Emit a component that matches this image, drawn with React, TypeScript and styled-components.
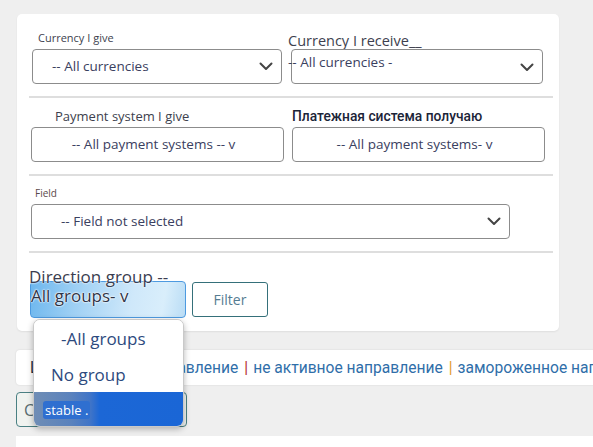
import React from "react";
import styled, { createGlobalStyle } from "styled-components";

const Global = createGlobalStyle`
  html, body { margin: 0; padding: 0; background: #efefef; overflow: hidden; }
  body { font-family: "Open Sans", "Noto Sans", sans-serif; }
  * { box-sizing: border-box; }
`;

const Page = styled.div`
  padding: 14px 0 0 16px;
  width: 593px;
  height: 447px;
  overflow: hidden;
`;

const Card = styled.div`
  margin-left: 1px;
  width: 542px;
  background: #fff;
  border-radius: 5px;
  box-shadow: 0 1px 2px rgba(0, 0, 0, 0.07);
  padding: 0 6px 0 12px;
`;

const Section = styled.div<{ $pt: number; $pb: number; $divider?: boolean }>`
  padding-top: ${(p) => p.$pt}px;
  padding-bottom: ${(p) => p.$pb}px;
  border-bottom: ${(p) => (p.$divider ? "2px solid #dedede" : "none")};
`;

const TwoCols = styled.div`
  display: grid;
  grid-template-columns: 256px 1fr;
  align-items: start;
`;

const Col = styled.div`
  display: flex;
  flex-direction: column;
`;

const Label = styled.div<{ $size: number; $lh: number; $indent: number; $mt?: number; $mb: number; $color?: string }>`
  font-size: ${(p) => p.$size}px;
  line-height: ${(p) => p.$lh}px;
  margin-left: ${(p) => p.$indent}px;
  margin-top: ${(p) => p.$mt ?? 0}px;
  margin-bottom: ${(p) => p.$mb}px;
  color: ${(p) => p.$color ?? "#3d3f4e"};
  white-space: nowrap;
`;

const RuLabel = styled(Label)`
  font-family: Roboto, "Liberation Sans", sans-serif;
  font-weight: 500;
`;

const SelectBox = styled.div<{ $indent: number; $width: number; $center?: boolean; $pl?: number; $top?: number }>`
  margin-left: ${(p) => p.$indent}px;
  width: ${(p) => p.$width}px;
  height: 35px;
  border: 1px solid #8c8c8c;
  border-radius: 4px;
  background: #fff;
  display: flex;
  align-items: ${(p) => (p.$top !== undefined ? "flex-start" : "center")};
  justify-content: ${(p) => (p.$center ? "center" : "space-between")};
  padding-top: ${(p) => p.$top ?? 0}px;
  padding-right: 8px;
  padding-left: ${(p) => p.$pl ?? 0}px;
  font-size: 13.5px;
  line-height: 19px;
  color: #3a4060;
  white-space: nowrap;
`;

const BoxText = styled.span<{ $shift?: number }>`
  margin-left: ${(p) => p.$shift ?? 0}px;
`;

const Chevron = styled.svg<{ $mt?: number }>`
  flex: none;
  margin-top: ${(p) => p.$mt ?? 0}px;
`;

const ChevronIcon = ({ mt }: { mt?: number }) => (
  <Chevron $mt={mt} width="14" height="9" viewBox="0 0 14 9">
    <polyline points="1.5,1.5 7,7 12.5,1.5" fill="none" stroke="#444" strokeWidth="2" strokeLinecap="round" strokeLinejoin="round" />
  </Chevron>
);

const GroupLabel = styled.div`
  font-size: 17px;
  line-height: 20px;
  color: #3a3d50;
  margin-bottom: -6px;
  position: relative;
  z-index: 2;
  text-shadow: 0 0 2px #fff, 0 0 2px #fff;
`;

const FilterRow = styled.div`
  display: flex;
  align-items: flex-start;
  gap: 6px;
  position: relative;
`;

const GroupSelect = styled.div`
  margin-left: 1px;
  width: 156px;
  height: 37px;
  border: 1px solid #4d9ae0;
  border-radius: 4px;
  background: linear-gradient(100deg, #6db7ee 0%, #9fd0f4 30%, #cfe8fa 65%, #d9eefb 85%, #b9dcf5 100%);
  padding: 4px 0 0 0;
  font-size: 17px;
  line-height: 20px;
  color: #2e3346;
  text-shadow: 0 0 2px #fff, 0 0 2px #fff, 0 0 1px #fff;
  white-space: nowrap;
`;

const FilterButton = styled.button`
  margin-top: 1px;
  width: 76px;
  height: 35px;
  border: 1px solid #35707a;
  border-radius: 3px;
  background: #fff;
  font-family: "Open Sans", sans-serif;
  font-size: 14px;
  color: #557c92;
  padding: 0;
`;

const Menu = styled.div`
  position: absolute;
  left: 4px;
  top: 38px;
  width: 151px;
  height: 108px;
  background: #fff;
  border: 1px solid #c9c9c9;
  border-radius: 7px;
  box-shadow: 0 2px 6px rgba(0, 0, 0, 0.28);
  overflow: hidden;
  z-index: 5;
  display: flex;
  flex-direction: column;
`;

const MenuItem = styled.div<{ $indent: number; $selected?: boolean }>`
  height: 36px;
  flex: none;
  display: flex;
  align-items: center;
  padding-left: ${(p) => p.$indent}px;
  font-size: ${(p) => (p.$selected ? 13 : 17)}px;
  color: ${(p) => (p.$selected ? "#fff" : "#2d4a7e")};
  background: ${(p) =>
    p.$selected
      ? "linear-gradient(90deg, #6f8db5 0%, #5a82bd 25%, #3f74c8 38%, #1c67d6 44%, #1a66d6 100%)"
      : "#fff"};
  white-space: nowrap;
`;

const SelectedText = styled.span`
  background: #2f6fd0;
  border-radius: 3px;
  padding: 0 2px;
`;

const Legend = styled.div`
  margin-top: 19px;
  width: 720px;
  height: 35px;
  background: #fff;
  border-radius: 4px 0 0 4px;
  box-shadow: 0 0 2px rgba(0, 0, 0, 0.12);
  display: flex;
  align-items: center;
  padding-left: 14px;
  font-family: Roboto, "Liberation Sans", sans-serif;
  font-size: 15.6px;
  color: #2f6ea9;
  white-space: nowrap;
`;

const LegendLead = styled.span`
  color: #223044;
  margin-right: 0;
`;

const Sep = styled.span<{ $color: string }>`
  color: ${(p) => p.$color};
  margin: 0 5px 0 6px;
`;

const StatusButton = styled.div`
  margin-top: 7px;
  width: 171px;
  height: 35px;
  border: 1px solid #4a8083;
  border-radius: 4px;
  background: #f0f3f0;
  display: flex;
  align-items: center;
  padding-left: 7px;
  font-size: 16px;
  color: #5a6d70;
`;

const BottomPanel = styled.div`
  margin-top: 9px;
  width: 720px;
  height: 30px;
  background: #fff;
`;

export default function App() {
  return (
    <>
      <Global />
      <Page>
        <Card>
          <Section $pt={17} $pb={12} $divider>
            <TwoCols>
              <Col>
                <Label $size={11} $lh={14} $indent={9} $mb={4}>Currency I give</Label>
                <SelectBox $indent={3} $width={250} $pl={19}>
                  <BoxText>-- All currencies</BoxText>
                  <ChevronIcon />
                </SelectBox>
              </Col>
              <Col>
                <Label $size={14.5} $lh={16} $indent={3} $mt={2} $mb={0}>Currency I receive__</Label>
                <SelectBox $indent={6} $width={252} $top={3}>
                  <BoxText $shift={-4}>-- All currencies -</BoxText>
                  <ChevronIcon mt={10} />
                </SelectBox>
              </Col>
            </TwoCols>
          </Section>

          <Section $pt={10} $pb={12} $divider>
            <TwoCols>
              <Col>
                <Label $size={13} $lh={16} $indent={26} $mb={3}>Payment system I give</Label>
                <SelectBox $indent={2} $width={253} $center>
                  <BoxText>-- All payment systems -- v</BoxText>
                </SelectBox>
              </Col>
              <Col>
                <RuLabel $size={13.8} $lh={16} $indent={7} $mb={3} $color="#1b2438">Платежная система получаю</RuLabel>
                <SelectBox $indent={7} $width={253} $center>
                  <BoxText>-- All payment systems- v</BoxText>
                </SelectBox>
              </Col>
            </TwoCols>
          </Section>

          <Section $pt={11} $pb={12} $divider>
            <Label $size={10} $lh={13} $indent={6} $mb={4} $color="#5a4a4a">Field</Label>
            <SelectBox $indent={2} $width={479} $pl={29}>
              <BoxText>-- Field not selected</BoxText>
              <ChevronIcon />
            </SelectBox>
          </Section>

          <Section $pt={14} $pb={13}>
            <GroupLabel>Direction group --</GroupLabel>
            <FilterRow>
              <GroupSelect>All groups- v</GroupSelect>
              <FilterButton>Filter</FilterButton>
              <Menu>
                <MenuItem $indent={27}>-All groups</MenuItem>
                <MenuItem $indent={17}>No group</MenuItem>
                <MenuItem $indent={9} $selected>
                  <SelectedText>stable .</SelectedText>
                </MenuItem>
              </Menu>
            </FilterRow>
          </Section>
        </Card>

        <Legend>
          <LegendLead>Цвет:</LegendLead>
          <span>активное направление</span>
          <Sep $color="#b3262a">|</Sep>
          <span>не активное направление</span>
          <Sep $color="#e2992c">|</Sep>
          <span>замороженное направление</span>
        </Legend>
        <StatusButton>Сохранить</StatusButton>
        <BottomPanel />
      </Page>
    </>
  );
}
